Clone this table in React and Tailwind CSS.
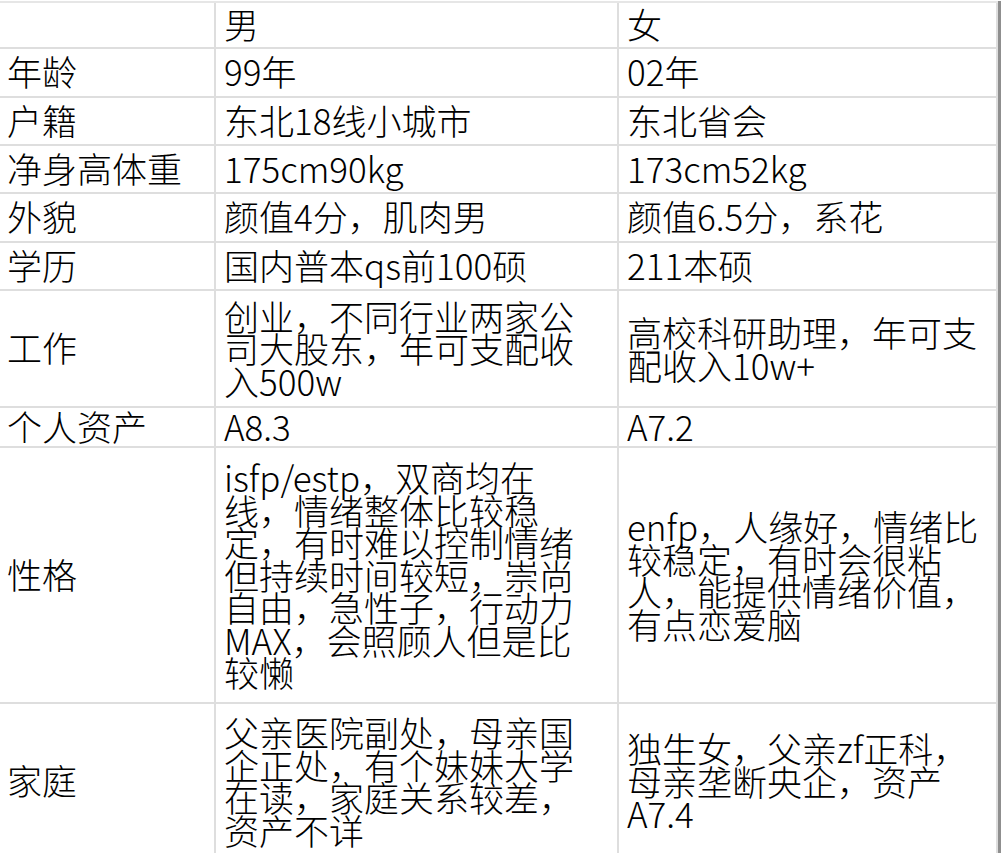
import React from "react";

const rows = [
  { h: "h-[46px]", a: "", b: "男", c: "女" },
  { h: "h-[49px]", a: "年龄", b: "99年", c: "02年" },
  { h: "h-[48px]", a: "户籍", b: "东北18线小城市", c: "东北省会" },
  { h: "h-[48px]", a: "净身高体重", b: "175cm90kg", c: "173cm52kg" },
  { h: "h-[49px]", a: "外貌", b: "颜值4分，肌肉男", c: "颜值6.5分，系花" },
  { h: "h-[48px]", a: "学历", b: "国内普本qs前100硕", c: "211本硕" },
  {
    h: "h-[117px]",
    a: "工作",
    b: ["创业，不同行业两家公", "司大股东，年可支配收", "入500w"],
    c: ["高校科研助理，年可支", "配收入10w+"],
  },
  { h: "h-[40px]", a: "个人资产", b: "A8.3", c: "A7.2" },
  {
    h: "h-[256px]",
    a: "性格",
    b: [
      "isfp/estp，双商均在",
      "线，情绪整体比较稳",
      "定，有时难以控制情绪",
      "但持续时间较短，崇尚",
      "自由，急性子，行动力",
      "MAX，会照顾人但是比",
      "较懒",
    ],
    c: ["enfp，人缘好，情绪比", "较稳定，有时会很粘", "人，能提供情绪价值，", "有点恋爱脑"],
  },
  {
    h: "h-[156px]",
    a: "家庭",
    b: ["父亲医院副处，母亲国", "企正处，有个妹妹大学", "在读，家庭关系较差，", "资产不详"],
    c: ["独生女，父亲zf正科，", "母亲垄断央企，资产", "A7.4"],
  },
];

function Cell({ v, h, pl }) {
  const multi = Array.isArray(v);
  return (
    <div className={`${h} ${pl} flex items-center border-b-2 border-r-2 border-[#dedede] whitespace-nowrap`}>
      {multi ? (
        <div className="leading-[32.5px]">
          {v.map((l, i) => (
            <div key={i}>{l}</div>
          ))}
        </div>
      ) : (
        <div className="leading-[36px] -mt-[3px]">{v}</div>
      )}
    </div>
  );
}

export default function App() {
  return (
    <div
      className="w-[1001px] h-[853px] overflow-hidden bg-white text-black text-[35px] font-light pt-px flex"
      style={{ fontFamily: '"Noto Sans CJK SC", "Noto Sans", sans-serif' }}
    >
      <div className="w-[998px] grid grid-cols-[216px_403px_379px] border-t-2 border-[#e6e6e6] content-start">
        {rows.map((r, i) => (
          <React.Fragment key={i}>
            <Cell v={r.a} h={r.h} pl="pl-[7px]" />
            <Cell v={r.b} h={r.h} pl="pl-2" />
            <Cell v={r.c} h={r.h} pl="pl-2" />
          </React.Fragment>
        ))}
      </div>
      <div className="w-[3px] h-full bg-[#8f8f8f]" />
    </div>
  );
}
